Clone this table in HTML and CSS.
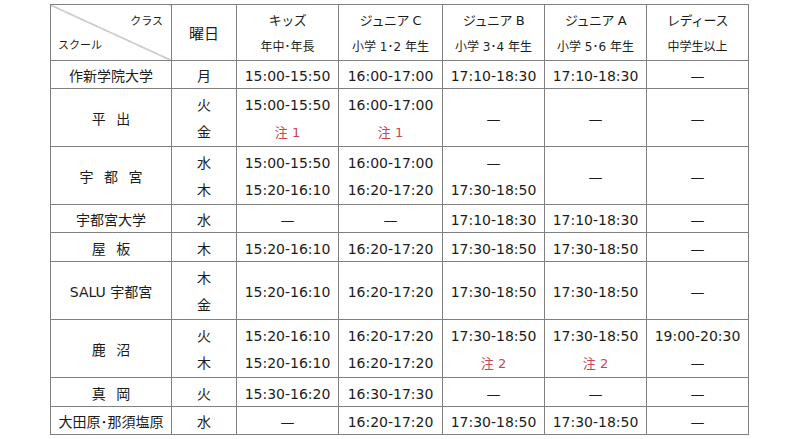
FILE: index.html
```html
<!DOCTYPE html>
<html lang="ja">
<head>
<meta charset="utf-8">
<link rel="stylesheet" href="styles.css">
</head>
<body>
<div class="page">
<table class="sched">
<colgroup>
<col class="c-school"><col class="c-day"><col class="c-kids"><col class="c-jc"><col class="c-jb"><col class="c-ja"><col class="c-lady">
</colgroup>
<thead>
<tr class="h-head">
<th class="diag"><div class="diag-in"><span class="d-top">クラス</span><span class="d-bot">スクール</span></div></th>
<th class="day-h">曜日</th>
<th><div class="hn">キッズ</div><div class="hs">年中･年長</div></th>
<th><div class="hn">ジュニア C</div><div class="hs">小学 1･2 年生</div></th>
<th><div class="hn">ジュニア B</div><div class="hs">小学 3･4 年生</div></th>
<th><div class="hn">ジュニア A</div><div class="hs">小学 5･6 年生</div></th>
<th><div class="hn">レディース</div><div class="hs">中学生以上</div></th>
</tr>
</thead>
<tbody>
<tr class="h-28">
<td>作新学院大学</td><td>月</td><td>15:00-15:50</td><td>16:00-17:00</td><td>17:10-18:30</td><td>17:10-18:30</td><td>—</td>
</tr>
<tr class="h-57">
<td class="sp">平 出</td>
<td><div class="ln">火</div><div class="ln">金</div></td>
<td><div class="ln">15:00-15:50</div><div class="ln note">注 1</div></td>
<td><div class="ln">16:00-17:00</div><div class="ln note">注 1</div></td>
<td>—</td><td>—</td><td>—</td>
</tr>
<tr class="h-58">
<td class="sp">宇 都 宮</td>
<td><div class="ln">水</div><div class="ln">木</div></td>
<td><div class="ln">15:00-15:50</div><div class="ln">15:20-16:10</div></td>
<td><div class="ln">16:00-17:00</div><div class="ln">16:20-17:20</div></td>
<td><div class="ln">—</div><div class="ln">17:30-18:50</div></td>
<td>—</td><td>—</td>
</tr>
<tr class="h-28">
<td>宇都宮大学</td><td>水</td><td>—</td><td>—</td><td>17:10-18:30</td><td>17:10-18:30</td><td>—</td>
</tr>
<tr class="h-29">
<td class="sp">屋 板</td><td>木</td><td>15:20-16:10</td><td>16:20-17:20</td><td>17:30-18:50</td><td>17:30-18:50</td><td>—</td>
</tr>
<tr class="h-57">
<td>SALU 宇都宮</td>
<td><div class="ln">木</div><div class="ln">金</div></td>
<td>15:20-16:10</td><td>16:20-17:20</td><td>17:30-18:50</td><td>17:30-18:50</td><td>—</td>
</tr>
<tr class="h-57">
<td class="sp">鹿 沼</td>
<td><div class="ln">火</div><div class="ln">木</div></td>
<td><div class="ln">15:20-16:10</div><div class="ln">15:20-16:10</div></td>
<td><div class="ln">16:20-17:20</div><div class="ln">16:20-17:20</div></td>
<td><div class="ln">17:30-18:50</div><div class="ln note">注 2</div></td>
<td><div class="ln">17:30-18:50</div><div class="ln note">注 2</div></td>
<td><div class="ln">19:00-20:30</div><div class="ln">—</div></td>
</tr>
<tr class="h-29">
<td class="sp">真 岡</td><td>火</td><td>15:30-16:20</td><td>16:30-17:30</td><td>—</td><td>—</td><td>—</td>
</tr>
<tr class="h-28">
<td>大田原･那須塩原</td><td>水</td><td>—</td><td>16:20-17:20</td><td>17:30-18:50</td><td>17:30-18:50</td><td>—</td>
</tr>
</tbody>
</table>
</div>
</body>
</html>
```

FILE: styles.css
```css
html, body {
  margin: 0;
  padding: 0;
  background: #ffffff;
}
.page {
  padding: 4px 0 0 50px;
}
.sched {
  border-collapse: collapse;
  table-layout: fixed;
  width: 699px;
  font-family: "DejaVu Sans", "Noto Sans CJK JP", sans-serif;
  font-size: 14px;
  color: #1c1c1c;
}
.c-school { width: 121px; }
.c-day { width: 65px; }
.c-kids { width: 102px; }
.c-jc { width: 104px; }
.c-jb { width: 102px; }
.c-ja { width: 102px; }
.c-lady { width: 102px; }
.sched th,
.sched td {
  border: 1px solid #808080;
  padding: 3px 0 0 0;
  text-align: center;
  vertical-align: middle;
  font-weight: normal;
  white-space: nowrap;
  line-height: 18px;
}
.h-head { height: 56px; }
.h-28 { height: 28px; }
.h-29 { height: 29px; }
.h-57 { height: 57px; }
.h-58 { height: 58px; }
.ln {
  height: 27px;
  line-height: 27px;
}
.note {
  color: #c8474b;
  font-size: 13px;
}
.sp {
  word-spacing: 6px;
}
.hn {
  font-size: 13px;
  height: 27px;
  line-height: 26px;
  letter-spacing: -0.5px;
}
.hs {
  font-size: 12px;
  height: 25px;
  line-height: 25px;
}
.day-h {
  font-size: 15px;
}
.sched th.diag {
  padding: 0;
  background: linear-gradient(to top right, transparent calc(50% - 0.7px), #808080 50%, transparent calc(50% + 0.7px));
}
.diag-in {
  height: 55px;
  display: flex;
  flex-direction: column;
  justify-content: space-between;
  font-size: 11px;
  padding: 8px 8px 5px 7px;
  box-sizing: border-box;
}
.d-top { align-self: flex-end; }
.d-bot { align-self: flex-start; }
```
